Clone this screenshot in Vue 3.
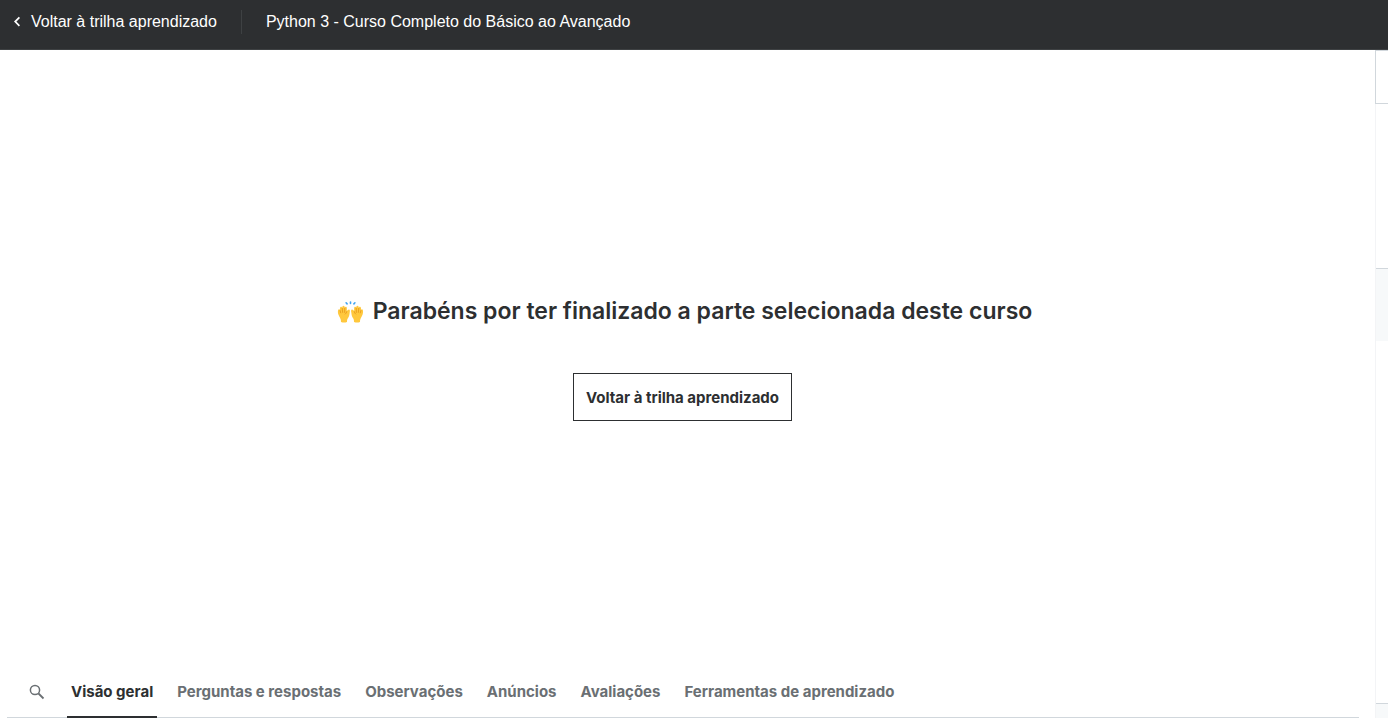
<script setup>
import { ref } from 'vue'

const tabs = [
  'Visão geral',
  'Perguntas e respostas',
  'Observações',
  'Anúncios',
  'Avaliações',
  'Ferramentas de aprendizado',
]
const active = ref(tabs[0])
</script>

<template>
  <div class="page">
    <header class="topbar">
      <a class="back" href="#">
        <svg class="chevron" viewBox="0 0 8 12" aria-hidden="true">
          <path d="M6.4 1.4 L2.2 5.6 L6.4 9.8" fill="none" stroke="currentColor" stroke-width="1.7" />
        </svg>
        Voltar à trilha aprendizado
      </a>
      <a class="course" href="#">Python 3 - Curso Completo do Básico ao Avançado</a>
    </header>

    <div class="body">
      <main class="content">
        <section class="stage">
          <h1 class="title">
            <svg class="hands" viewBox="0 0 26 22" aria-hidden="true">
              <g fill="none" stroke="#42a5f5" stroke-width="1.6" stroke-linecap="round">
                <path d="M8.6 1.8 L9.6 2.9 M13 1 V2.4 M17.4 1.8 L16.4 2.9" />
              </g>
              <g id="hand">
                <path
                  fill="#ffc83d"
                  d="M3.5 21 C3.8 18 2 16.5 .9 13.5 C.2 11.5 .2 8.5 1.4 8.2 C2.1 8 2.3 8.6 2.5 9.2 C2.3 7.5 2.5 5.8 3.5 5.7 C4.2 5.6 4.5 6.2 4.7 7 C4.8 5.5 5.2 4.8 6 4.8 C6.9 4.8 7.2 5.7 7.3 6.8 C7.6 5.9 8.1 5.5 8.7 5.8 C9.6 6.2 9.3 8 9.3 10.3 C10.1 9 11.2 8.2 12 8.8 C12.6 9.4 12.4 10.5 12.2 11.6 C11.9 14 11.6 15.7 10.4 17.3 C9.6 18.2 9.5 19.5 9.5 21 Q6.5 22 3.5 21 Z"
                />
                <path
                  fill="none"
                  stroke="#e59619"
                  stroke-width=".8"
                  d="M2.5 9.2 L3.3 12.2 M4.7 7 L5.2 11.8 M7.3 6.8 L7.1 11.8 M9.3 10.3 Q8.9 12.4 7.5 13.3"
                />
              </g>
              <use href="#hand" transform="translate(26 0) scale(-1 1)" />
            </svg>
            Parabéns por ter finalizado a parte selecionada deste curso
          </h1>
          <button class="return" type="button">Voltar à trilha aprendizado</button>
        </section>

        <nav class="tabs">
          <button class="search" type="button" aria-label="Pesquisar">
            <svg viewBox="0 0 16 16" aria-hidden="true">
              <circle cx="6" cy="6" r="4.6" fill="none" stroke="currentColor" stroke-width="1.5" />
              <path d="M9.5 9.5 L14.5 14.5" stroke="currentColor" stroke-width="1.8" />
            </svg>
          </button>
          <button
            v-for="tab in tabs"
            :key="tab"
            type="button"
            class="tab"
            :class="{ active: tab === active }"
            @click="active = tab"
          >
            {{ tab }}
          </button>
        </nav>
      </main>

      <aside class="sidebar">
        <div class="side-head"></div>
        <div class="side-list"></div>
        <div class="side-section"></div>
        <div class="side-rest"></div>
        <div class="side-next"></div>
      </aside>
    </div>
  </div>
</template>

<style>
body {
  margin: 0;
  background: #fff;
}
</style>

<style scoped>
.page {
  display: flex;
  flex-direction: column;
  min-height: 100vh;
  font-family: "Liberation Sans", Arial, sans-serif;
  font-size: 16px;
  color: #2d2f31;
}
.page * {
  box-sizing: border-box;
}
.topbar {
  display: flex;
  align-items: flex-start;
  height: 50px;
  padding: 10px 13px;
  background: #2d2f31;
  border-bottom: 1px solid #3e4143;
}
.topbar a {
  line-height: 24px;
  color: #fff;
  text-decoration: none;
  white-space: nowrap;
}
.back {
  display: flex;
  align-items: center;
  gap: 10px;
  padding-right: 24px;
  border-right: 1px solid #3e4143;
}
.chevron {
  width: 8px;
  height: 12px;
}
.course {
  padding-left: 24px;
}
.body {
  display: flex;
  flex: 1;
}
.content {
  display: flex;
  flex: 1;
  flex-direction: column;
}
.stage {
  display: flex;
  flex: 1;
  flex-direction: column;
  align-items: center;
  justify-content: center;
  gap: 46px;
  padding-right: 10px;
}
.title {
  display: flex;
  align-items: center;
  gap: 9px;
  margin: 0;
  padding-left: 4px;
  font-family: Inter, "Liberation Sans", sans-serif;
  font-size: 23px;
  font-weight: 600;
  line-height: 32px;
}
.hands {
  width: 27px;
  height: 24px;
  padding-top: 2px;
}
.return {
  height: 48px;
  padding: 2px 12px 0;
  border: 1px solid #2d2f31;
  background: #fff;
  color: inherit;
  font: 700 15px/24px Inter, "Liberation Sans", sans-serif;
}
.tabs {
  display: flex;
  height: 52px;
  margin: 0 16px 0 7px;
  padding-left: 22px;
  gap: 16px;
  box-shadow: inset 0 -1px #d1d7dc;
}
.search,
.tab {
  padding: 2px 4px 0;
  border: 0;
  background: none;
  color: #6a6f73;
  white-space: nowrap;
}
.search {
  width: 22px;
  padding: 2px 0 0;
  text-align: left;
}
.search svg {
  width: 16px;
  height: 16px;
}
.tab {
  border-bottom: 2px solid transparent;
  font: 700 15px/24px Inter, "Liberation Sans", sans-serif;
}
.tab.active {
  border-bottom-color: #2d2f31;
  color: #2d2f31;
}
.sidebar {
  display: flex;
  flex-direction: column;
  width: 13px;
  border-left: 1px solid #f3f4f6;
}
.side-head {
  height: 54px;
  margin-left: -1px;
  border: 1px solid #d1d7dc;
  border-right: 0;
}
.side-list {
  height: 164px;
}
.side-section {
  height: 73px;
  border-top: 1px solid #d1d7dc;
  background: #f7f9fa;
}
.side-rest {
  flex: 1;
}
.side-next {
  height: 15px;
  border-top: 1px solid #d1d7dc;
  background: #f7f9fa;
}
</style>
